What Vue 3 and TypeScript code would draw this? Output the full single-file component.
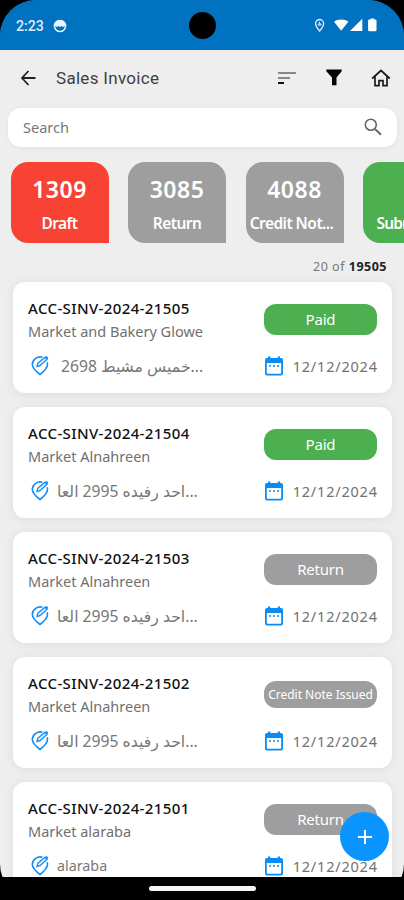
<script setup lang="ts">
interface Tile { count: string; label: string; tone: string }
interface Invoice { id: string; customer: string; place: string; kind: string; status: string; tone: string }

const tiles: Tile[] = [
  { count: '1309', label: 'Draft', tone: 'red' },
  { count: '3085', label: 'Return', tone: 'gray' },
  { count: '4088', label: 'Credit Not...', tone: 'gray' },
  { count: '', label: 'Submitted', tone: 'green' },
]

const invoices: Invoice[] = [
  { id: 'ACC-SINV-2024-21505', customer: 'Market and Bakery Glowe', place: 'خميس مشيط 2698...', kind: 'wide', status: 'Paid', tone: 'green' },
  { id: 'ACC-SINV-2024-21504', customer: 'Market Alnahreen', place: 'احد رفيده 2995 العا...', kind: 'arabic', status: 'Paid', tone: 'green' },
  { id: 'ACC-SINV-2024-21503', customer: 'Market Alnahreen', place: 'احد رفيده 2995 العا...', kind: 'arabic', status: 'Return', tone: 'gray' },
  { id: 'ACC-SINV-2024-21502', customer: 'Market Alnahreen', place: 'احد رفيده 2995 العا...', kind: 'arabic', status: 'Credit Note Issued', tone: 'gray small' },
  { id: 'ACC-SINV-2024-21501', customer: 'Market alaraba', place: 'alaraba', kind: 'latin', status: 'Return', tone: 'gray' },
]
</script>

<template>
  <div class="device">
    <div class="screen">
      <div class="status-bar">
        <span class="clock">2:23</span>
        <svg class="face" viewBox="0 0 14 14"><circle cx="7" cy="7" r="5.600" fill="none" stroke="#eaf4ff" stroke-width="1.500" /><path d="M2 3.500 4 1.500h6l2 2V7l-2 1-1.300-1L7 8 5.300 7 4 8 2 7z" fill="#eaf4ff" /></svg>
        <svg class="signals" viewBox="0 0 66 18">
          <path d="M5.600 2.500a4 4 0 0 0-4 4c0 3 4 7.500 4 7.500s4-4.500 4-7.500a4 4 0 0 0-4-4z" fill="none" stroke="#d9ecfc" stroke-width="1.400" />
          <path d="M5.600 4.500v3M4.100 7a1.500 1.500 0 1 0 3 0z" fill="none" stroke="#d9ecfc" stroke-width="1" />
          <path d="M20 4.800C23.500 1.800 31 1.800 34.300 4.800L27.200 13.700z" fill="#fff" />
          <path d="M48.300 1.800v12.200H36z" fill="#fff" />
          <path d="M56.500 2.500V1.500h3.600v1h1.200q1.200 0 1.200 1.200v9.300q0 1.200-1.200 1.200h-6q-1.200 0-1.200-1.200V3.700q0-1.200 1.200-1.200z" fill="#fff" />
        </svg>
        <span class="camera"></span>
      </div>

      <header class="app-bar">
        <svg class="back" viewBox="0 0 18 18"><path d="M16.500 9H3M9.500 2 3 9l6.500 7" fill="none" stroke="#222" stroke-width="1.800" /></svg>
        <h1>Sales Invoice</h1>
        <svg class="sort" viewBox="0 0 18 14"><path d="M0 2h18" stroke="#888" stroke-width="2" /><path d="M0 7h12" stroke="#888" stroke-width="2" /><path d="M0 12h6" stroke="#111" stroke-width="2" /></svg>
        <svg class="funnel" viewBox="0 0 16 17"><path d="M.3.500h15.400v1.700L10.500 8.500v7.800H6V8.500L.3 2.200z" fill="#050505" /></svg>
        <svg class="home" viewBox="0 0 20 18"><path d="M1.200 9.500 10 1.500l8.800 8M4 7.500v9.200h4v-5h4v5h4V7.500" fill="none" stroke="#1b1b1b" stroke-width="1.700" /></svg>
      </header>

      <div class="search">
        <span>Search</span>
        <svg viewBox="0 0 18 18"><circle cx="6.800" cy="6.800" r="5.500" fill="none" stroke="#666" stroke-width="1.600" /><path d="m11 11 6 5.700" stroke="#666" stroke-width="1.900" /></svg>
      </div>

      <div class="tiles">
        <div v-for="tile in tiles" :key="tile.label" class="tile" :class="tile.tone">
          <strong>{{ tile.count }}</strong>
          <span>{{ tile.label }}</span>
        </div>
      </div>

      <p class="summary">20 of <b>19505</b></p>

      <main class="list">
        <article v-for="inv in invoices" :key="inv.id" class="card">
          <div class="details">
            <h2>{{ inv.id }}</h2>
            <p class="customer">{{ inv.customer }}</p>
            <div class="place">
              <svg viewBox="0 0 18 21"><path d="M11.500 2.200A8 8 0 0 0 1.300 9.300C1.300 13 5 16.500 9 19.500c4-3 7.500-6.500 7.500-10.200q0-1-.3-2" fill="none" stroke="#168cf5" stroke-width="1.600" /><path d="m6 11.500.7-3.200 7.300-6.100 2 2.200-7 6.300z" fill="#d5ebff" stroke="#168cf5" stroke-width="1.300" /><path d="m14 2.200 1.700-1.300 1.700 1.900L16 4.400z" fill="#168cf5" /></svg>
              <span :class="inv.kind">{{ inv.place }}</span>
            </div>
          </div>
          <div class="side">
            <div class="badge-slot"><span class="badge" :class="inv.tone">{{ inv.status }}</span></div>
            <div class="date">
              <svg viewBox="0 0 18 20"><path d="M2 2h1V.5h2.300V2h7.400V.5H15V2h1q2 0 2 2v13.500q0 2-2 2H2q-2 0-2-2V4q0-2 2-2zM1.800 7v10q0 .8.8.8h12.800q.8 0 .8-.8V7z" fill="#098cf5" fill-rule="evenodd" /><path d="M4 10h2M8 10h2M12 10h2" stroke="#098cf5" stroke-width="1.500" /></svg>
              <span>12/12/2024</span>
            </div>
          </div>
        </article>
      </main>
      <button class="add" aria-label="Add"><svg viewBox="0 0 14 14"><path d="M7 0v14M0 7h14" stroke="#fff" stroke-width="2" /></svg></button>
      <div class="nav-bar"><span></span></div>
    </div>
  </div>
</template>

<style>
body { background: #000; }
</style>

<style scoped>
* { box-sizing: border-box; }
.device { width: 404px; height: 900px; background: #000; font-family: "Noto Sans", "DejaVu Sans", sans-serif; }
.screen { position: relative; width: 404px; height: 900px; display: flex; flex-direction: column; overflow: hidden; border-radius: 36px; background: linear-gradient(#0072bf 49px, #eee 49px, #eee 877px, #000 877px); }
svg { display: block; flex: none; }
h1, h2, p { margin: 0; white-space: nowrap; }
.status-bar { position: relative; flex: none; height: 50px; display: flex; align-items: center; padding: 2px 24px 0 16px; background: #0072bf; border-bottom: 1px solid #1769a5; }
.clock { width: 37px; font: 500 14.200px Roboto, sans-serif; color: #dcecff; }
.face { width: 14px; height: 14px; }
.signals { width: 66px; height: 18px; margin-left: auto; }
.camera { position: absolute; left: 189px; top: 12px; width: 27px; height: 27px; border-radius: 50%; background: #000; }
.app-bar { flex: none; height: 58px; display: flex; align-items: center; padding: 0 13px 3px 19px; }
.back { width: 18px; height: 18px; }
h1 { margin-left: 19px; width: 222px; font: 400 17px Roboto, sans-serif; letter-spacing: .3px; color: #404040; }
.sort { width: 18px; height: 14px; }
.funnel { width: 16px; height: 17px; margin-left: 30px; }
.home { width: 20px; height: 18px; margin-left: auto; }
.search { flex: none; height: 39px; margin: 0 7px 0 8px; padding: 0 15px; display: flex; align-items: center; justify-content: space-between; border-radius: 13px; background: #fff; box-shadow: 0 1px 5px rgba(0,0,0,.05); color: #777; font-size: 14.500px; }
.search span { margin-top: -1px; }
.search svg { width: 18px; height: 18px; margin-top: -2px; }
.tiles { flex: none; display: flex; gap: 19.500px; padding: 15px 0 0 10.500px; height: 96px; }
.tile { flex: none; width: 98px; height: 81px; border-radius: 17px 17px 0 17px; color: #fff; text-align: center; white-space: nowrap; }
.tile strong { display: block; height: 46px; padding-top: 11px; font-size: 23px; line-height: 32px; font-weight: 600; letter-spacing: .5px; }
.tile span { display: block; font-size: 15.500px; line-height: 30px; font-weight: 600; letter-spacing: -.55px; }
.tile:nth-child(3) span { margin-left: -6px; }
.tile:nth-child(4) span { letter-spacing: -.85px; }
.red { background: #f84334; }
.gray { background: #9e9e9e; }
.green { background: #4caf50; }
.summary { flex: none; height: 39px; padding: 14px 17px 0 0; text-align: right; font-size: 12.500px; line-height: 20px; letter-spacing: .5px; color: #777; }
.summary b { color: #222; }
.list { flex: none; display: flex; flex-direction: column; gap: 14px; padding: 0 12px 0 13px; }
.card { flex: none; height: 111.100px; display: flex; justify-content: space-between; padding: 14.500px 15px 0; border-radius: 12px; background: #fff; box-shadow: 0 1px 11px rgba(0,0,0,.075); }
.details { display: flex; flex-direction: column; }
h2 { height: 23px; font-size: 15px; line-height: 23px; font-weight: 500; letter-spacing: .38px; color: #111; }
.customer { height: 22px; font-size: 14.500px; line-height: 22px; color: #707070; }
.place { display: flex; align-items: center; height: 30px; margin: 9px 0 0 3px; white-space: nowrap; color: #777; }
.place svg { width: 18px; height: 21px; margin-right: 8px; }
.place span { font-size: 15.700px; line-height: 22px; }
.place .latin { font-size: 14.300px; }
.place .wide { padding-left: 4px; }
.side { width: 113px; }
.badge-slot { height: 46px; display: flex; align-items: center; }
.badge { width: 113px; height: 31px; border-radius: 12px; color: #fff; text-align: center; font-size: 15px; line-height: 31px; letter-spacing: -.2px; white-space: nowrap; }
.badge.small { height: 27px; font-size: 12px; line-height: 27px; letter-spacing: 0; }
.date { height: 30px; margin-top: 8px; display: flex; align-items: center; justify-content: space-between; color: #707070; font-size: 14.500px; letter-spacing: .8px; white-space: nowrap; }
.date span { margin-right: -.8px; }
.date svg { width: 18px; height: 20px; margin: 1px 0 0 1px; }
.add { position: absolute; left: 340px; top: 812px; width: 49px; height: 49px; border: 0; border-radius: 50%; padding: 0; display: flex; align-items: center; justify-content: center; background: #0994ff; }
.add svg { width: 14px; height: 14px; }
.nav-bar { position: absolute; left: 0; bottom: 0; width: 404px; height: 23px; display: flex; justify-content: center; padding-top: 9px; background: #000; }
.nav-bar span { width: 107px; height: 5px; border-radius: 3px; background: #f5f5f5; }
</style>
